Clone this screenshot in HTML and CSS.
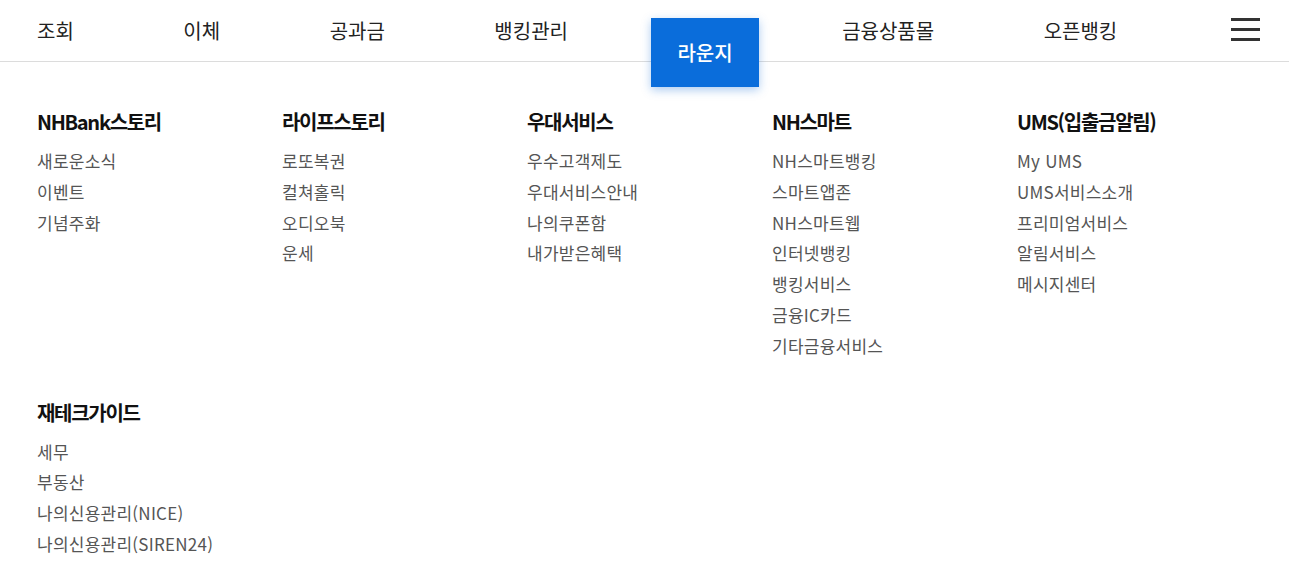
FILE: index.html
```html
<!DOCTYPE html>
<html lang="ko">
<head>
<meta charset="utf-8">
<title>NH 메뉴</title>
<link rel="stylesheet" href="styles.css">
</head>
<body>
<header class="gnb">
  <nav class="gnb-list">
    <a class="gnb-item">조회</a>
    <a class="gnb-item">이체</a>
    <a class="gnb-item">공과금</a>
    <a class="gnb-item">뱅킹관리</a>
    <a class="gnb-item is-active">라운지</a>
    <a class="gnb-item">금융상품몰</a>
    <a class="gnb-item">오픈뱅킹</a>
  </nav>
  <button class="hamburger" aria-label="전체메뉴">
    <span class="bar"></span><span class="bar"></span><span class="bar"></span>
  </button>
</header>
<main class="submenu">
  <section class="group">
    <h3 class="group-title">NHBank스토리</h3>
    <ul class="links"><li>새로운소식</li><li>이벤트</li><li>기념주화</li></ul>
  </section>
  <section class="group">
    <h3 class="group-title">라이프스토리</h3>
    <ul class="links"><li>로또복권</li><li>컬쳐홀릭</li><li>오디오북</li><li>운세</li></ul>
  </section>
  <section class="group">
    <h3 class="group-title">우대서비스</h3>
    <ul class="links"><li>우수고객제도</li><li>우대서비스안내</li><li>나의쿠폰함</li><li>내가받은혜택</li></ul>
  </section>
  <section class="group">
    <h3 class="group-title">NH스마트</h3>
    <ul class="links"><li>NH스마트뱅킹</li><li>스마트앱존</li><li>NH스마트웹</li><li>인터넷뱅킹</li><li>뱅킹서비스</li><li>금융IC카드</li><li>기타금융서비스</li></ul>
  </section>
  <section class="group">
    <h3 class="group-title">UMS(입출금알림)</h3>
    <ul class="links"><li>My UMS</li><li>UMS서비스소개</li><li>프리미엄서비스</li><li>알림서비스</li><li>메시지센터</li></ul>
  </section>
  <section class="group">
    <h3 class="group-title">재테크가이드</h3>
    <ul class="links"><li>세무</li><li>부동산</li><li>나의신용관리(NICE)</li><li>나의신용관리(SIREN24)</li></ul>
  </section>
</main>
</body>
</html>
```
FILE: styles.css
```css
* { box-sizing: border-box; }
html, body { margin: 0; padding: 0; background: #fff; }
body {
  font-family: "Noto Sans CJK KR", "Noto Sans", sans-serif;
  color: #222;
}
.gnb {
  height: 62px;
  border-bottom: 1px solid #dcdcdc;
  display: flex;
  align-items: flex-start;
  justify-content: space-between;
  padding: 0 29px 0 37px;
}
.gnb-list {
  display: flex;
  align-items: flex-start;
  gap: 109.5px;
}
.gnb-item {
  display: block;
  font-size: 20px;
  letter-spacing: 0;
  line-height: 61px;
  height: 61px;
  color: #222;
  white-space: nowrap;
}
.gnb-item.is-active {
  margin: 18px -26px 0;
  padding: 0 26px;
  height: 69px;
  line-height: 69px;
  background: #0a6ddb;
  color: #fff;
  font-weight: 500;
  box-shadow: 0 3px 9px rgba(20, 110, 215, 0.35);
  position: relative;
  z-index: 2;
}
.hamburger {
  margin-top: 18px;
  width: 29px;
  height: 23px;
  padding: 0;
  border: 0;
  background: none;
  display: flex;
  flex-direction: column;
  justify-content: space-between;
}
.bar {
  display: block;
  width: 29px;
  height: 3px;
  background: #333;
}
.submenu {
  display: grid;
  grid-template-columns: repeat(5, 245px);
  row-gap: 36px;
  padding: 45px 0 0 37px;
}
.group-title {
  margin: 0 0 9px;
  font-size: 20px;
  font-weight: 700;
  letter-spacing: -1.3px;
  line-height: 30px;
  color: #111;
}
.links {
  list-style: none;
  margin: 0;
  padding: 0;
}
.links li {
  font-size: 17px;
  letter-spacing: 0.25px;
  line-height: 30.8px;
  color: #555;
  white-space: nowrap;
}
```
